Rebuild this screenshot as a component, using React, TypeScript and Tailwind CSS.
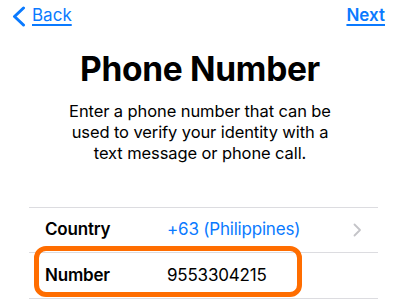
import React from "react";

export default function App() {
  return (
    <div
      className="w-[400px] h-[300px] bg-white overflow-hidden relative text-black"
      style={{ fontFamily: "Inter, 'Noto Sans', sans-serif" }}
    >
      {/* nav bar */}
      <div className="flex items-center justify-between h-[30px] pl-[12px] pr-[15px] pt-[2px]">
        <div className="flex items-center gap-[6px] text-[#0a7aff]">
          <svg width="14" height="21" viewBox="0 0 14 21">
            <polyline
              points="11.5,2 2.5,10.5 11.5,19"
              fill="none"
              stroke="#0a7aff"
              strokeWidth="3"
              strokeLinecap="round"
              strokeLinejoin="round"
            />
          </svg>
          <span className="text-[17px] underline underline-offset-[3px] decoration-[1.5px]">Back</span>
        </div>
        <span className="text-[17px] font-semibold text-[#0a7aff] underline underline-offset-[3px] decoration-[1.5px]">
          Next
        </span>
      </div>

      {/* heading */}
      <h1 className="mt-[19px] text-center text-[33.5px] leading-[40px] font-bold tracking-[-0.3px]">
        Phone Number
      </h1>
      <p className="mt-[12px] text-center text-[16.5px] leading-[21px] tracking-[-0.1px]">
        Enter a phone number that can be
        <br />
        used to verify your identity with a
        <br />
        text message or phone call.
      </p>

      {/* table */}
      <div className="mt-[43px] ml-[29px] mr-[22px] border-t border-[#dcdce0]">
        <div className="flex items-center h-[45px] pl-[16px] pr-[16px] border-b border-[#dcdce0]">
          <span className="w-[122px] text-[17px] font-semibold tracking-[-0.2px]">Country</span>
          <span className="flex-1 text-[17px] text-[#0a7aff] tracking-[-0.2px]">+63 (Philippines)</span>
          <svg width="9" height="14" viewBox="0 0 9 14">
            <polyline
              points="1.5,1.5 7,7 1.5,12.5"
              fill="none"
              stroke="#c4c4c8"
              strokeWidth="1.8"
              strokeLinecap="round"
              strokeLinejoin="round"
            />
          </svg>
        </div>
        <div className="flex items-center h-[46px] pl-[16px] border-b border-[#dcdce0]">
          <span className="w-[122px] text-[17px] font-semibold tracking-[-0.2px]">Number</span>
          <span className="text-[17px] tracking-[-0.2px]">9553304215</span>
        </div>
      </div>

      {/* highlight annotation */}
      <div className="absolute left-[34px] top-[246px] w-[268px] h-[51px] border-[5px] border-[#ff6d00] rounded-[12px]" />
    </div>
  );
}
